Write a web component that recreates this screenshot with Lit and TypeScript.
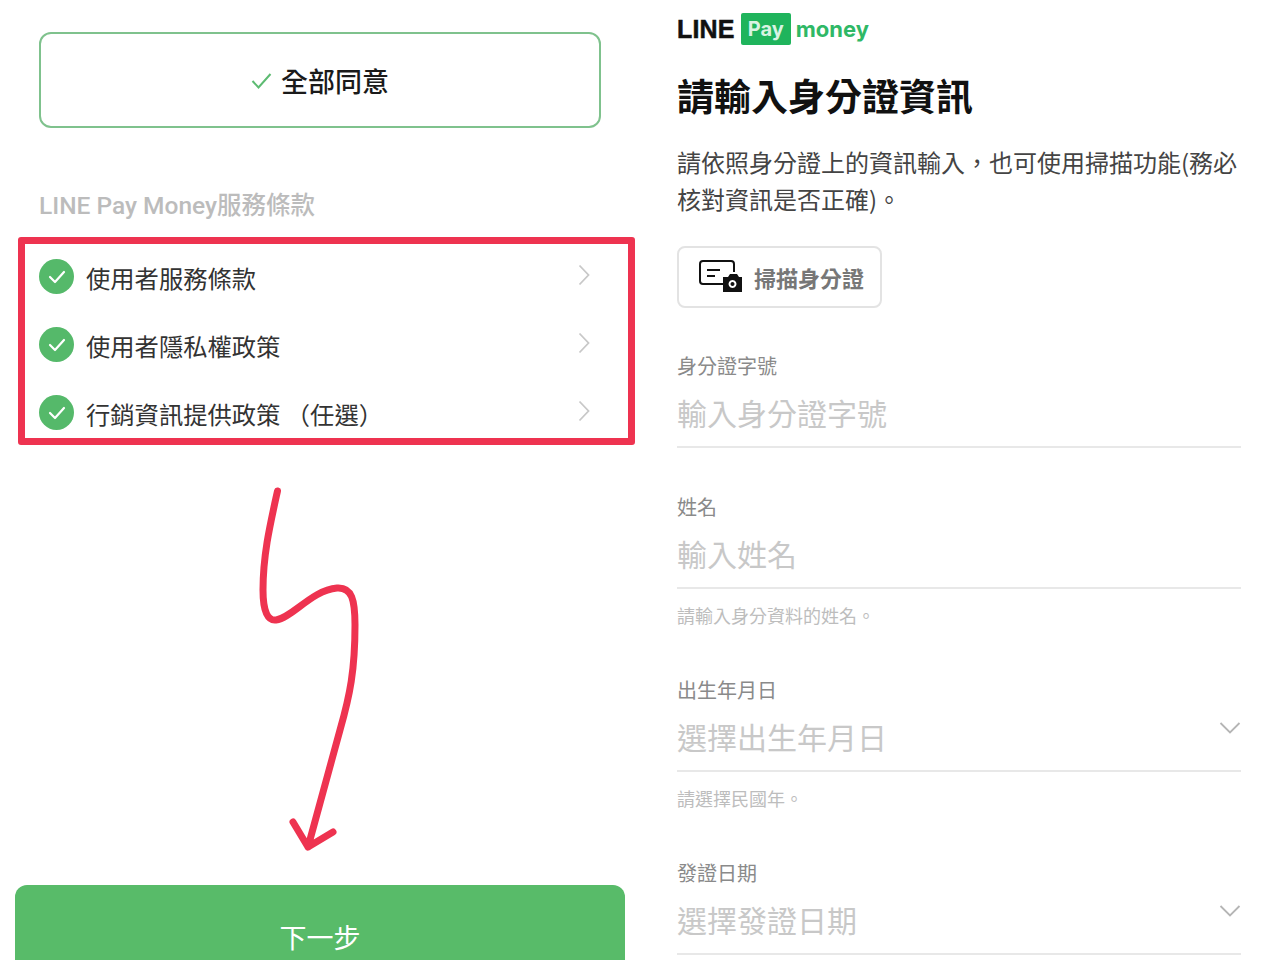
import { html, LitElement, css, svg } from 'lit';
import { customElement } from 'lit/decorators.js';

const CJK = `"Noto Sans CJK TC", "Noto Sans CJK JP", sans-serif`;

const terms = ['使用者服務條款', '使用者隱私權政策', '行銷資訊提供政策 （任選）'];

type Field = { label: string; placeholder: string; hint?: string; select?: boolean };

const fields: Field[] = [
  { label: '身分證字號', placeholder: '輸入身分證字號' },
  { label: '姓名', placeholder: '輸入姓名', hint: '請輸入身分資料的姓名。' },
  { label: '出生年月日', placeholder: '選擇出生年月日', hint: '請選擇民國年。', select: true },
  { label: '發證日期', placeholder: '選擇發證日期', select: true },
];

@customElement('app-root')
export class AppRoot extends LitElement {
  static styles = css`
    :host {
      display: block;
      width: 1280px;
      height: 960px;
      overflow: hidden;
      background: #fff;
      font-family: ${css([CJK] as unknown as TemplateStringsArray)};
    }

    .page {
      display: grid;
      grid-template-columns: 640px 640px;
      height: 960px;
    }

    /* Left screenshot */
    .left {
      position: relative;
      display: flex;
      flex-direction: column;
      padding-top: 32px;
      box-sizing: border-box;
    }

    .agree {
      display: flex;
      align-items: center;
      justify-content: center;
      gap: 9px;
      box-sizing: border-box;
      width: 562px;
      height: 96px;
      margin-left: 39px;
      border: 2.5px solid #7fc28d;
      border-radius: 12px;
      font-size: 27px;
      font-weight: 500;
      color: #1a1a1a;
    }

    .agree svg {
      width: 21px;
      height: 18px;
      margin-top: 2px;
    }

    .section-title {
      margin: 58px 0 0 39px;
      height: 40px;
      line-height: 40px;
      font-family: Roboto, ${css([CJK] as unknown as TemplateStringsArray)};
      font-size: 24.5px;
      font-weight: 500;
      color: #bcbcbc;
      white-space: nowrap;
    }

    .terms {
      box-sizing: border-box;
      width: 617px;
      height: 208px;
      margin: 11px 0 0 18px;
      padding: 0 38px 0 14px;
      border: 7px solid #ee3350;
      border-radius: 3px;
      display: grid;
      grid-auto-rows: 68px;
    }

    .term {
      display: flex;
      align-items: center;
      gap: 12px;
      font-size: 24.3px;
      color: #333;
      white-space: pre;
    }

    .term .tick {
      width: 35px;
      height: 35px;
      flex: none;
      margin-top: -4px;
    }

    .term .label {
      flex: 1;
      margin-top: -2px;
    }

    .term .chevron {
      width: 12px;
      height: 22px;
      flex: none;
      margin-top: -6px;
    }

    .next {
      position: absolute;
      left: 15px;
      top: 885px;
      box-sizing: border-box;
      width: 610px;
      height: 110px;
      padding-top: 32px;
      background: #58bb69;
      border-radius: 12px;
      color: #fff;
      font-size: 27px;
      line-height: 40px;
      text-align: center;
    }

    .arrow {
      position: absolute;
      left: 0;
      top: 0;
      width: 640px;
      height: 960px;
      pointer-events: none;
    }

    /* Right screenshot */
    .right {
      display: flex;
      flex-direction: column;
      box-sizing: border-box;
      padding: 13px 39px 0 37px;
    }

    .logo {
      display: flex;
      align-items: center;
      height: 32px;
      font-family: 'Liberation Sans', Arial, sans-serif;
      font-weight: 700;
    }

    .logo .line {
      font-size: 25px;
      color: #111;
      letter-spacing: 0.2px;
      -webkit-text-stroke: 0.5px #111;
    }

    .logo .pay {
      display: flex;
      align-items: center;
      justify-content: center;
      width: 50px;
      height: 32px;
      margin-left: 6px;
      background: #1fb45c;
      border-radius: 2px;
      color: #d9f3e2;
      font-family: Inter, sans-serif;
      font-size: 20px;
    }

    .logo .money {
      margin-left: 5px;
      font-family: Inter, sans-serif;
      font-size: 22px;
      color: #2fb866;
    }

    h1 {
      margin: 27px 0 0;
      height: 46px;
      font-size: 37px;
      line-height: 46px;
      font-weight: 700;
      color: #111;
      white-space: nowrap;
    }

    .intro {
      margin: 25px 0 0;
      height: 74px;
      font-size: 24px;
      line-height: 37px;
      color: #444;
    }

    .scan {
      display: inline-flex;
      align-items: center;
      gap: 11px;
      align-self: flex-start;
      box-sizing: border-box;
      width: 205px;
      height: 62px;
      margin-top: 29px;
      padding-left: 20px;
      border: 2px solid #e3e3e3;
      border-radius: 8px;
      color: #777;
      font-size: 22px;
      font-weight: 700;
    }

    .scan svg {
      width: 44px;
      height: 34px;
      flex: none;
    }

    .field {
      display: flex;
      flex-direction: column;
    }

    .field + .field {
      margin-top: 44px;
    }

    .fields {
      margin-top: 43px;
    }

    .field .name {
      height: 30px;
      font-size: 20px;
      line-height: 30px;
      color: #8a8a8a;
    }

    .field .input {
      display: flex;
      align-items: center;
      justify-content: space-between;
      box-sizing: border-box;
      height: 67px;
      padding-bottom: 4px;
      border-bottom: 2px solid #e8e8e8;
      font-size: 30px;
      color: #c8c8c8;
    }

    .field .input svg {
      width: 22px;
      height: 14px;
      margin-top: -16px;
    }

    .field .hint {
      height: 26px;
      margin-top: 13px;
      margin-bottom: 3px;
      font-size: 18px;
      line-height: 26px;
      color: #bdbdbd;
    }
  `;

  private renderTerm(label: string) {
    return html`
      <div class="term">
        <svg class="tick" viewBox="0 0 35 35">
          <circle cx="17.5" cy="17.5" r="17.5" fill="#55b96a"></circle>
          <path d="M11 18l5 5 9-10" fill="none" stroke="#fff" stroke-width="2.2" stroke-linecap="round" stroke-linejoin="round"></path>
        </svg>
        <span class="label">${label}</span>
        <svg class="chevron" viewBox="0 0 12 22">
          <path d="M1.5 1.5l9 9.5-9 9.5" fill="none" stroke="#c8c8c8" stroke-width="1.8"></path>
        </svg>
      </div>
    `;
  }

  private renderField(field: Field) {
    return html`
      <div class="field">
        <div class="name">${field.label}</div>
        <div class="input">
          <span>${field.placeholder}</span>
          ${field.select
            ? html`<svg viewBox="0 0 22 14">
                <path d="M1.5 2l9.5 9.5L20.5 2" fill="none" stroke="#b5b5b5" stroke-width="1.8"></path>
              </svg>`
            : ''}
        </div>
        ${field.hint ? html`<div class="hint">${field.hint}</div>` : ''}
      </div>
    `;
  }

  private renderArrow() {
    return svg`
      <path
        d="M277.5 491 C270 525 263 555 263 590 C263 612 268 621 276 620 C292 618 312 590 337 588 C352 587 355 600 355 625 C355 670 350 695 340 730 L308 847 M293 822 L308 847 L333 832"
        fill="none"
        stroke="#ee3350"
        stroke-width="7"
        stroke-linecap="round"
        stroke-linejoin="round"
      ></path>
    `;
  }

  protected render() {
    return html`
      <div class="page">
        <section class="left">
          <div class="agree">
            <svg viewBox="0 0 21 18">
              <path d="M1.5 9l6 6.5L19.5 2" fill="none" stroke="#5dbb72" stroke-width="2"></path>
            </svg>
            <span>全部同意</span>
          </div>
          <div class="section-title">LINE Pay Money服務條款</div>
          <div class="terms">${terms.map((t) => this.renderTerm(t))}</div>
          <div class="next">下一步</div>
          <svg class="arrow" viewBox="0 0 640 960">${this.renderArrow()}</svg>
        </section>

        <section class="right">
          <div class="logo">
            <span class="line">LINE</span>
            <span class="pay">Pay</span>
            <span class="money">money</span>
          </div>
          <h1>請輸入身分證資訊</h1>
          <p class="intro">請依照身分證上的資訊輸入，也可使用掃描功能(務必核對資訊是否正確)。</p>
          <div class="scan">
            <svg viewBox="0 0 44 34">
              <path d="M24 24H4a3 3 0 0 1-3-3V4a3 3 0 0 1 3-3h28a3 3 0 0 1 3 3v8" fill="none" stroke="#111" stroke-width="2"></path>
              <path d="M8 10h13M8 16h8" fill="none" stroke="#111" stroke-width="2"></path>
              <path fill="#111" fill-rule="evenodd" d="M24 17h5l2-3h7l2 3h3v15H24zM33.5 20a4 4 0 1 0 0.01 0zM33.5 22a2 2 0 1 1-0.01 0z"></path>
            </svg>
            <span>掃描身分證</span>
          </div>
          <div class="fields">${fields.map((f) => this.renderField(f))}</div>
        </section>
      </div>
    `;
  }
}
